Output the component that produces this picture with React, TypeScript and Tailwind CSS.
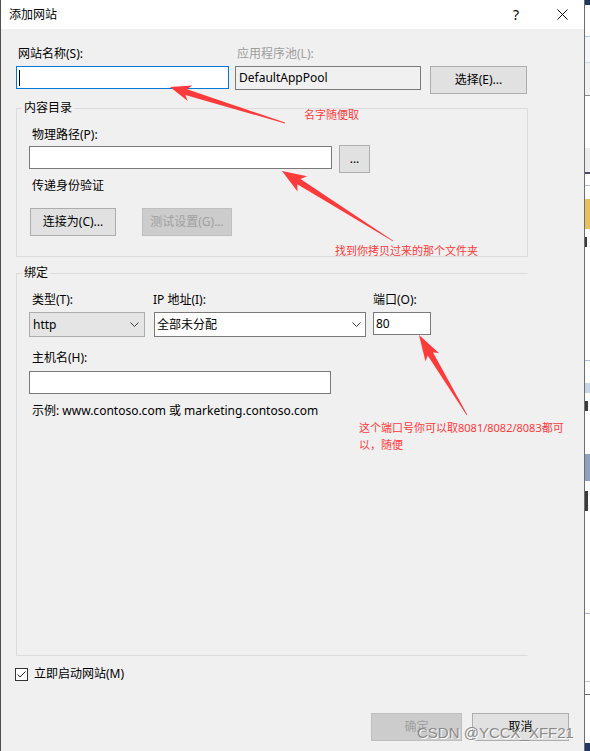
import React from "react";

const font = "font-['Noto_Sans','Noto_Sans_CJK_SC',sans-serif]";

// tapered red arrow, from tail (tx,ty) to tip (hx,hy)
function arrowPoints(
  tx: number,
  ty: number,
  hx: number,
  hy: number,
  headLen: number,
  headW: number,
  neckW: number
) {
  const dx = hx - tx;
  const dy = hy - ty;
  const L = Math.hypot(dx, dy);
  const ux = dx / L;
  const uy = dy / L;
  const nx = -uy;
  const ny = ux;
  const p = (d: number, w: number) => [tx + ux * d + nx * w, ty + uy * d + ny * w];
  const pts = [
    p(0, 0.4),
    p(L - headLen + 4, neckW),
    p(L - headLen, headW),
    p(L, 0),
    p(L - headLen, -headW),
    p(L - headLen + 4, -neckW),
    p(0, -0.4),
  ];
  return pts.map(([x, y]) => `${x.toFixed(1)},${y.toFixed(1)}`).join(" ");
}

const Chevron = () => (
  <svg width="9" height="5" viewBox="0 0 9 5" className="shrink-0">
    <polyline points="0.5,0.5 4.5,4.5 8.5,0.5" fill="none" stroke="#3c3c3c" strokeWidth="1" />
  </svg>
);

const Button = ({ label, w, disabled }: { label: string; w: string; disabled?: boolean }) => (
  <div
    className={`${w} h-[28px] flex items-center justify-center border ${
      disabled ? "bg-[#cccccc] border-[#bfbfbf] text-[#a0a0a0]" : "bg-[#e1e1e1] border-[#adadad] text-black"
    }`}
  >
    {label}
  </div>
);

const RightStrip = () => (
  <div className="w-[5px] h-full flex flex-col bg-white">
    <div className="h-[5px] bg-[#1f3864]" />
    <div className="h-[31px]" />
    <div className="h-[1px] bg-[#b4c8e0]" />
    <div className="h-[25px] bg-[#f3f6fb]" />
    <div className="h-[1px] bg-[#c8d8e8]" />
    <div className="h-[32px] bg-[#f2f2f2]" />
    <div className="h-[1px] bg-[#8a8a8a]" />
    <div className="h-[52px]" />
    <div className="h-[24px] bg-[#ececec]" />
    <div className="h-[2px] bg-[#4a4a6a]" />
    <div className="h-[11px]" />
    <div className="h-[1px] bg-[#a8bcd8]" />
    <div className="h-[13px]" />
    <div className="h-[30px] bg-[#e8c060]" />
    <div className="h-[8px]" />
    <div className="h-[10px] bg-[#3a3a3a] w-[2px]" />
    <div className="h-[113px]" />
    <div className="h-[1px] bg-[#a8bcd8]" />
    <div className="h-[22px]" />
    <div className="h-[10px] bg-[#c8d4e8]" />
    <div className="h-[8px]" />
    <div className="h-[10px] w-[3px] bg-[#3a3a3a]" />
    <div className="h-[43px]" />
    <div className="h-[27px] bg-[#90a0c0]" />
    <div className="h-[10px]" />
    <div className="h-[20px] w-[3px] bg-[#3a3a3a]" />
    <div className="h-[102px]" />
    <div className="h-[1px] bg-[#b0b0c8]" />
    <div className="h-[67px]" />
    <div className="h-[1px] bg-[#c8c8c8]" />
    <div className="h-[12px]" />
    <div className="h-[1px] bg-[#6a6a6a]" />
    <div className="flex-1" />
    <div className="h-[8px] bg-[#1f3864]" />
  </div>
);

export default function App() {
  return (
    <div className={`relative w-[590px] h-[751px] flex overflow-hidden ${font} text-[12px] leading-[16px] text-black`}>
      {/* dialog */}
      <div className="w-[585px] h-full flex flex-col border-l border-r border-l-[#505050] border-r-[#6e6e6e] bg-[#f0f0f0]">
        {/* title bar */}
        <div className="h-[29px] bg-white flex items-center shrink-0">
          <span className="pl-[8px] flex-1">添加网站</span>
          <span className="w-[44px] text-center text-[14px] pr-[4px]">?</span>
          <div className="w-[44px] flex items-center justify-center pb-[1px]">
            <svg width="11" height="11" viewBox="0 0 11 11">
              <path d="M0.5 0.5 L10.5 10.5 M10.5 0.5 L0.5 10.5" stroke="#111" strokeWidth="1" fill="none" />
            </svg>
          </div>
        </div>

        {/* body */}
        <div className="flex-1 flex flex-col px-[15px] pt-[17px]">
          {/* site name / app pool row */}
          <div className="flex">
            <div className="w-[213px] flex flex-col">
              <span className="ml-[2px]">网站名称(S):</span>
              <div className="mt-[4px] h-[23px] border border-[#0078d7] bg-white flex items-center pl-[2px]">
                <div className="w-[1px] h-[16px] bg-black" />
              </div>
            </div>
            <div className="ml-[6px] w-[186px] flex flex-col">
              <span className="ml-[2px] text-[#9d9d9d]">应用程序池(L):</span>
              <div className="mt-[4px] h-[24px] border border-[#7a7a7a] bg-[#f0f0f0] flex items-center pl-[3px]">
                DefaultAppPool
              </div>
            </div>
            <div className="ml-[9px] w-[97px] flex flex-col">
              <div className="h-[16px]" />
              <div className="mt-[4px]">
                <Button label="选择(E)..." w="w-[97px]" />
              </div>
            </div>
          </div>

          {/* content directory */}
          <fieldset className="mt-[6px] w-[512px] border border-[#dcdcdc]">
            <legend className="ml-[5px] px-[2px] leading-[16px]">内容目录</legend>
            <div className="flex flex-col pl-[12px] pt-[11px] pb-[20px]">
              <span className="ml-[3px]">物理路径(P):</span>
              <div className="mt-[2px] flex items-start">
                <div className="mt-[1px] w-[303px] h-[23px] border border-[#7a7a7a] bg-white" />
                <div className="ml-[7px]">
                  <Button label="..." w="w-[31px]" />
                </div>
              </div>
              <span className="ml-[3px] mt-[5px]">传递身份验证</span>
              <div className="mt-[14px] flex">
                <div className="ml-[1px]">
                  <Button label="连接为(C)..." w="w-[86px]" />
                </div>
                <div className="ml-[26px]">
                  <Button label="测试设置(G)..." w="w-[90px]" disabled />
                </div>
              </div>
            </div>
          </fieldset>

          {/* bindings */}
          <fieldset className="mt-[8px] w-[512px] border border-[#dcdcdc] border-r-transparent">
            <legend className="ml-[5px] px-[2px] leading-[16px]">绑定</legend>
            <div className="h-[374px] flex flex-col pl-[12px] pt-[11px]">
              <div className="flex">
                <div className="w-[116px] flex flex-col">
                  <span className="ml-[3px]">类型(T):</span>
                  <div className="mt-[4px] h-[25px] border border-[#adadad] bg-[#e5e5e5] flex items-center justify-between pl-[3px] pr-[5px]">
                    <span>http</span>
                    <Chevron />
                  </div>
                </div>
                <div className="ml-[9px] w-[212px] flex flex-col">
                  <span className="-ml-[1px]">IP 地址(I):</span>
                  <div className="mt-[4px] h-[25px] border border-[#7a7a7a] bg-white flex items-center justify-between pl-[2px] pr-[4px]">
                    <span>全部未分配</span>
                    <Chevron />
                  </div>
                </div>
                <div className="ml-[7px] w-[58px] flex flex-col">
                  <span>端口(O):</span>
                  <div className="mt-[4px] h-[23px] border border-[#7a7a7a] bg-white flex items-center pl-[2px]">80</div>
                </div>
              </div>
              <span className="ml-[3px] mt-[13px]">主机名(H):</span>
              <div className="mt-[5px] w-[302px] h-[23px] border border-[#7a7a7a] bg-white" />
              <span className="ml-[3px] mt-[9px]">示例: www.contoso.com 或 marketing.contoso.com</span>
            </div>
          </fieldset>

          {/* start immediately */}
          <div className="mt-[10px] -ml-[1px] flex items-center">
            <div className="w-[13px] h-[13px] border border-[#333333] bg-white flex items-center justify-center">
              <svg width="11" height="11" viewBox="0 0 11 11">
                <polyline points="1.5,5.5 4,8 9.5,2.5" fill="none" stroke="#222" strokeWidth="1" />
              </svg>
            </div>
            <span className="ml-[6px]">立即启动网站(M)</span>
          </div>

          {/* ok / cancel */}
          <div className="mt-[31px] flex justify-end">
            <Button label="确定" w="w-[91px]" disabled />
            <div className="ml-[10px]">
              <Button label="取消" w="w-[97px]" />
            </div>
          </div>
        </div>
      </div>

      <RightStrip />

      {/* red annotations */}
      <svg className="absolute inset-0 pointer-events-none" width="590" height="751" viewBox="0 0 590 751">
        <polygon points={arrowPoints(285, 123, 170, 87, 21, 8, 3)} fill="#ff3a3a" />
        <polygon points={arrowPoints(393, 241, 282, 171, 24, 9, 3)} fill="#ff3a3a" />
        <polygon points={arrowPoints(467, 415, 419, 335, 26, 8, 3)} fill="#ff3a3a" />
      </svg>
      <div className="absolute left-[304px] top-[106px] text-[11px] leading-[17px] text-[#ff3a3a]">名字随便取</div>
      <div className="absolute left-[335px] top-[242px] text-[11px] leading-[17px] text-[#ff3a3a]">找到你拷贝过来的那个文件夹</div>
      <div className="absolute left-[359px] top-[419px] text-[11px] leading-[17px] text-[#ff3a3a]">
        <div>这个端口号你可以取8081/8082/8083都可</div>
        <div>以，随便</div>
      </div>

      {/* watermark */}
      <div className="absolute left-[417px] top-[724px] text-[15px] leading-[18px] font-['Liberation_Sans',sans-serif] text-[#8a8a8a] [text-shadow:1px_1px_0_#ffffff]">
        CSDN @YCCX_XFF21
      </div>
    </div>
  );
}
